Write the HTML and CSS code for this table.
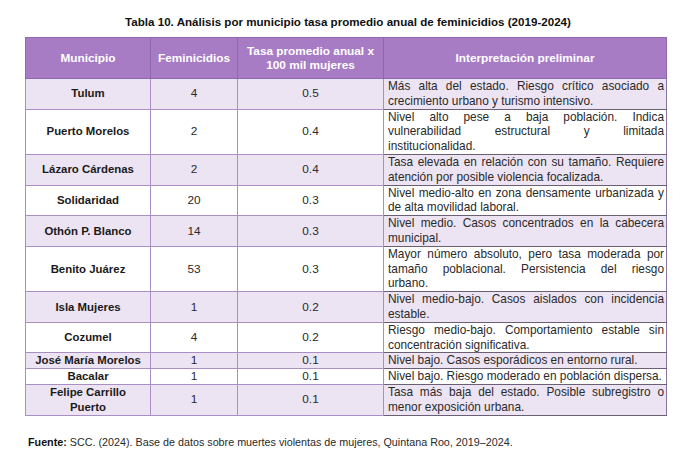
FILE: index.html
```html
<!DOCTYPE html>
<html lang="es">
<head>
<meta charset="utf-8">
<link rel="stylesheet" href="styles.css">
</head>
<body>
<div class="page">
  <h1 class="title">Tabla 10. Análisis por municipio tasa promedio anual de feminicidios (2019-2024)</h1>
  <table class="tbl">
    <colgroup>
      <col class="c1"><col class="c2"><col class="c3"><col class="c4">
    </colgroup>
    <thead>
      <tr><th>Municipio</th><th>Feminicidios</th><th>Tasa promedio anual x 100 mil mujeres</th><th>Interpretación preliminar</th></tr>
    </thead>
    <tbody>
      <tr class="alt"><td class="mun">Tulum</td><td>4</td><td>0.5</td><td class="txt">Más alta del estado. Riesgo crítico asociado a crecimiento urbano y turismo intensivo.</td></tr>
      <tr><td class="mun">Puerto Morelos</td><td>2</td><td>0.4</td><td class="txt full">Nivel alto pese a baja población. Indica vulnerabilidad estructural y limitada<br>institucionalidad.</td></tr>
      <tr class="alt"><td class="mun">Lázaro Cárdenas</td><td>2</td><td>0.4</td><td class="txt">Tasa elevada en relación con su tamaño. Requiere atención por posible violencia focalizada.</td></tr>
      <tr><td class="mun">Solidaridad</td><td>20</td><td>0.3</td><td class="txt">Nivel medio-alto en zona densamente urbanizada y de alta movilidad laboral.</td></tr>
      <tr class="alt"><td class="mun">Othón P. Blanco</td><td>14</td><td>0.3</td><td class="txt">Nivel medio. Casos concentrados en la cabecera municipal.</td></tr>
      <tr><td class="mun">Benito Juárez</td><td>53</td><td>0.3</td><td class="txt full">Mayor número absoluto, pero tasa moderada por tamaño poblacional. Persistencia del riesgo<br>urbano.</td></tr>
      <tr class="alt"><td class="mun">Isla Mujeres</td><td>1</td><td>0.2</td><td class="txt">Nivel medio-bajo. Casos aislados con incidencia estable.</td></tr>
      <tr><td class="mun">Cozumel</td><td>4</td><td>0.2</td><td class="txt">Riesgo medio-bajo. Comportamiento estable sin concentración significativa.</td></tr>
      <tr class="alt"><td class="mun">José María Morelos</td><td>1</td><td>0.1</td><td class="txt">Nivel bajo. Casos esporádicos en entorno rural.</td></tr>
      <tr><td class="mun">Bacalar</td><td>1</td><td>0.1</td><td class="txt">Nivel bajo. Riesgo moderado en población dispersa.</td></tr>
      <tr class="alt"><td class="mun">Felipe Carrillo Puerto</td><td>1</td><td>0.1</td><td class="txt">Tasa más baja del estado. Posible subregistro o menor exposición urbana.</td></tr>
    </tbody>
  </table>
  <p class="source"><b>Fuente:</b> SCC. (2024). Base de datos sobre muertes violentas de mujeres, Quintana Roo, 2019–2024.</p>
</div>
</body>
</html>
```
FILE: styles.css
```css
html, body {
  margin: 0;
  padding: 0;
  background: #ffffff;
}
body {
  font-family: "Liberation Sans", Arial, sans-serif;
  color: #1c1c1c;
}
.page {
  width: 696px;
  height: 462px;
  padding-top: 15px;
  box-sizing: border-box;
}
.title {
  margin: 0 0 8px 0;
  font-size: 11.6px;
  line-height: 14px;
  font-weight: bold;
  text-align: center;
  color: #111111;
}
.tbl {
  margin-left: 25px;
  width: 641px;
  border-collapse: collapse;
  table-layout: fixed;
  font-size: 11.8px;
  line-height: 14.8px;
}
.c1 { width: 125px; }
.c2 { width: 87px; }
.c3 { width: 146px; }
.c4 { width: 283px; }
.tbl th {
  background: #a77cc5;
  color: #ffffff;
  font-weight: bold;
  font-size: 11.8px;
  line-height: 14px;
  height: 40px;
  padding: 0 4px;
  border: 1px solid #9068ae;
  text-align: center;
  vertical-align: middle;
}
.tbl td {
  border: 1px solid #a98fc2;
  padding: 0;
  text-align: center;
  vertical-align: middle;
  color: #2a2a2a;
}
.tbl tr.alt td {
  background: #ede4f3;
}
.tbl td.mun {
  font-weight: bold;
  font-size: 11.4px;
  color: #1a1a1a;
  padding: 0 6px;
}
.tbl td.txt {
  font-size: 11.85px;
  text-align: justify;
  padding: 0 2px 0 4px;
  border-color: #6b5f74;
  border-right-color: #8a74a0;
}
.tbl td.full {
  text-align-last: justify;
}
.source {
  margin: 20px 0 0 28px;
  font-size: 10.75px;
  line-height: 13px;
  color: #2a2a2a;
}
.source b {
  color: #111111;
}
```
